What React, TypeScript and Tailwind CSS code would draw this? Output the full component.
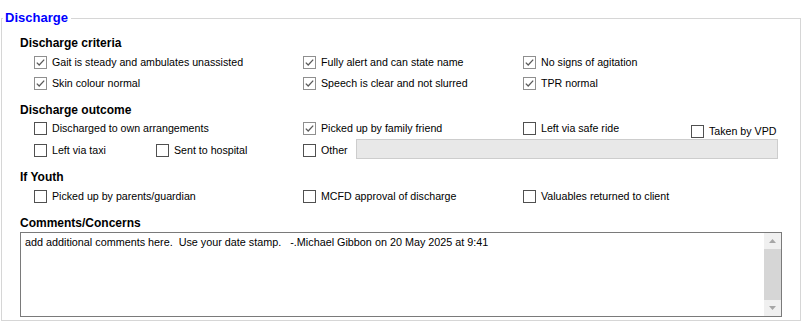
import React from "react";

function Box({ checked }: { checked?: boolean }) {
  return (
    <span
      className={
        checked
          ? "relative inline-block h-[13px] w-[13px] shrink-0 border border-[#8f8f8f] bg-white"
          : "relative inline-block h-[13px] w-[13px] shrink-0 border border-[#505050] bg-white"
      }
    >
      {checked && (
        <svg className="absolute left-0 top-0" width="11" height="11" viewBox="0 0 11 11">
          <path d="M1.8 5.6 L4.2 8 L9.2 2.6" fill="none" stroke="#5a5a5a" strokeWidth="1.3" />
        </svg>
      )}
    </span>
  );
}

function Check({ label, checked, className }: { label: string; checked?: boolean; className?: string }) {
  return (
    <div className={"flex items-center gap-[5px] " + (className ?? "")}>
      <Box checked={checked} />
      <span className="whitespace-nowrap leading-[13px]">{label}</span>
    </div>
  );
}

function Heading({ children, className }: { children: React.ReactNode; className?: string }) {
  return (
    <div className={"h-[16px] text-[12px] font-bold leading-[16px] text-black " + (className ?? "")}>
      {children}
    </div>
  );
}

export default function App() {
  return (
    <div
      className="h-[322px] w-[802px] overflow-hidden bg-white pt-[18px] text-[10.65px] text-black"
      style={{ fontFamily: '"Liberation Sans", Arial, sans-serif' }}
    >
      <div className="relative ml-px h-[303px] w-[800px] border border-[#d6d6d6]">
        <div className="absolute left-[1px] top-[-9px] bg-white pl-[2px] pr-[3px] text-[13px] font-bold leading-[16px] text-[#0000ff]">
          Discharge
        </div>
        <div className="px-[18px]">
          <Heading className="mt-[16px]">Discharge criteria</Heading>
          <div className="mt-[1px] flex h-[20px] items-center pl-[14px]">
            <Check className="w-[269px]" checked label="Gait is steady and ambulates unassisted" />
            <Check className="w-[220px]" checked label="Fully alert and can state name" />
            <Check checked label="No signs of agitation" />
          </div>
          <div className="mt-[1px] flex h-[20px] items-center pl-[14px]">
            <Check className="w-[269px]" checked label="Skin colour normal" />
            <Check className="w-[220px]" checked label="Speech is clear and not slurred" />
            <Check checked label="TPR normal" />
          </div>

          <Heading className="mt-[9px]">Discharge outcome</Heading>
          <div className="flex h-[21px] items-center pl-[14px]">
            <Check className="w-[269px]" label="Discharged to own arrangements" />
            <Check className="w-[220px]" checked label="Picked up by family friend" />
            <Check className="w-[168px]" label="Left via safe ride" />
            <Check className="mt-[5px]" label="Taken by VPD" />
          </div>
          <div className="flex h-[20px] items-center pl-[14px]">
            <Check className="w-[122px] pt-[2px]" label="Left via taxi" />
            <Check className="w-[147px] pt-[2px]" label="Sent to hospital" />
            <Check className="w-[53px] pt-[2px]" label="Other" />
            <div className="h-[20px] w-[422px] border border-[#cdcdcd] bg-[#e8e8e8]" />
          </div>

          <Heading className="mt-[10px]">If Youth</Heading>
          <div className="mt-[1px] flex h-[21px] items-center pl-[14px]">
            <Check className="w-[269px]" label="Picked up by parents/guardian" />
            <Check className="w-[220px]" label="MCFD approval of discharge" />
            <Check label="Valuables returned to client" />
          </div>

          <Heading className="mt-[8px]">Comments/Concerns</Heading>
          <div className="mt-[1px] flex h-[85px] w-[762px] border border-[#7a7a7a] bg-white">
            <div className="flex-1 whitespace-pre pl-[4px] pt-[3px] text-[10.8px] leading-[13px]">
              add additional comments here.  Use your date stamp.   -.Michael Gibbon on 20 May 2025 at 9:41
            </div>
            <div className="flex w-[17px] flex-col bg-[#d6d6d6]">
              <div className="flex h-[16px] items-center justify-center bg-[#f0f0f0]">
                <svg width="7" height="4" viewBox="0 0 7 4">
                  <path d="M0 4 L3.5 0 L7 4 Z" fill="#a6a6a6" />
                </svg>
              </div>
              <div className="flex-1" />
              <div className="flex h-[16px] items-center justify-center bg-[#f0f0f0]">
                <svg width="7" height="4" viewBox="0 0 7 4">
                  <path d="M0 0 L7 0 L3.5 4 Z" fill="#a6a6a6" />
                </svg>
              </div>
            </div>
          </div>
        </div>
      </div>
    </div>
  );
}
